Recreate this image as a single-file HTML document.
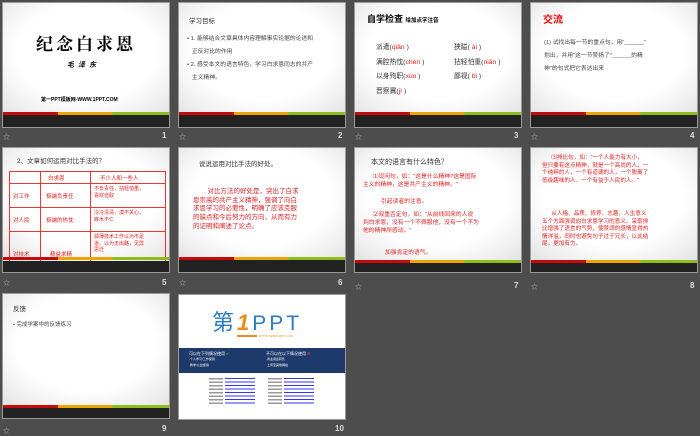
<!DOCTYPE html>
<html><head><meta charset="utf-8"><style>
*{margin:0;padding:0;box-sizing:border-box}
body{width:700px;height:433px;background:#4d4d4d;position:relative;overflow:hidden;font-family:"Liberation Sans","Noto Sans CJK SC",sans-serif}
.s{position:absolute;width:168px;height:126px;border:1px solid #9a9a9a;background:radial-gradient(ellipse 75% 70% at 50% 40%,#fff 55%,#e2e2e2 100%);overflow:hidden}
.bar{position:absolute;left:0;right:0;top:109px;height:3px;background:linear-gradient(90deg,#c80a0a 0 33%,#eba400 33% 66%,#8fbd1c 66%)}
.blk{position:absolute;left:0;right:0;top:112px;bottom:0;background:#222}
.t{position:absolute;white-space:nowrap}
.n{position:absolute;color:#ddd;font-size:8px;font-weight:bold}
.st{position:absolute;color:#bbb;font-size:7px}
.r{color:#e02020}
</style></head><body>

<!-- slide 1 -->
<div class="s" style="left:2px;top:2px">
<div class="t" style="left:33px;top:27px;font-size:17px;font-weight:bold;letter-spacing:3px;font-family:'Noto Serif CJK SC',serif">纪念白求恩</div>
<div class="t" style="left:64px;top:57px;font-size:7px;font-weight:bold;letter-spacing:4px;font-style:italic">毛泽东</div>
<div class="t" style="left:38px;top:93px;font-size:5px;font-weight:bold">第一PPT模板网-WWW.1PPT.COM</div>
<div class="bar"></div><div class="blk"></div></div>
<div class="st" style="left:3px;top:132px">☆</div><div class="n" style="left:162px;top:131px">1</div>

<!-- slide 2 -->
<div class="s" style="left:178px;top:2px">
<div class="t" style="left:10px;top:12px;font-size:6.5px;color:#333">学习目标</div>
<div class="t" style="left:8px;top:30px;font-size:5.8px;color:#444;line-height:13px">• 1. 能够结合文章具体内容理解事实论据的论述和<br>&nbsp;&nbsp;&nbsp;正反对比的作用<br>• 2. 感受本文的语言特色，学习白求恩同志的共产<br>&nbsp;&nbsp;&nbsp;主义精神。</div>
<div class="bar"></div><div class="blk"></div></div>
<div class="st" style="left:179px;top:132px">☆</div><div class="n" style="left:338px;top:131px">2</div>

<!-- slide 3 -->
<div class="s" style="left:354px;top:2px">
<div class="t" style="left:12px;top:9px;font-size:9px;font-weight:bold">自学检查 <span style="font-size:5.5px">给加点字注音</span></div>
<div class="t" style="left:21px;top:38px;font-size:6.8px;color:#333;line-height:14.5px">派遣(<span class="r">qiǎn</span> )<br>满腔热忱(<span class="r">chén</span> )<br>以身殉职(<span class="r">xùn</span> )<br>晋察冀(<span class="r">jì</span> )</div>
<div class="t" style="left:99px;top:38px;font-size:6.8px;color:#333;line-height:14.5px">狭隘( <span class="r">ài</span> )<br>拈轻怕重(<span class="r">niān</span> )<br>鄙视( <span class="r">bǐ</span> )</div>
<div class="bar"></div><div class="blk"></div></div>
<div class="st" style="left:355px;top:132px">☆</div><div class="n" style="left:514px;top:131px">3</div>

<!-- slide 4 -->
<div class="s" style="left:530px;top:2px">
<div class="t" style="left:12px;top:8px;font-size:10px;font-weight:bold;color:#e00">交流</div>
<div class="t" style="left:13px;top:34px;font-size:5.8px;color:#444;line-height:13px">(1) 试找出每一节的重点句，用"______"<br>划出，并用"这一节赞扬了"______的精<br>神"的句式把它表达出来</div>
<div class="bar"></div><div class="blk"></div></div>
<div class="st" style="left:531px;top:132px">☆</div><div class="n" style="left:690px;top:131px">4</div>

<!-- slide 5 -->
<div class="s" style="left:2px;top:147px">
<div class="t" style="left:14px;top:7px;font-size:6.5px;color:#333">2、文章如何运用对比手法的？</div>
<div style="position:absolute;left:6px;top:23px;width:157px;height:96px;border:1px solid #e33">
<div style="position:absolute;left:0;right:0;top:11px;border-top:1px solid #e33"></div>
<div style="position:absolute;left:0;right:0;top:35px;border-top:1px solid #e33"></div>
<div style="position:absolute;left:0;right:0;top:59px;border-top:1px solid #e33"></div>
<div style="position:absolute;top:0;bottom:0;left:30px;border-left:1px solid #e33"></div>
<div style="position:absolute;top:0;bottom:0;left:80px;border-left:1px solid #e33"></div>
<div class="t r" style="left:38px;top:2px;font-size:5.5px">白求恩</div>
<div class="t r" style="left:90px;top:2px;font-size:5.5px">不少人和一些人</div>
<div class="t r" style="left:3px;top:20px;font-size:5.5px">对工作</div>
<div class="t r" style="left:36px;top:20px;font-size:5.5px">极端负责任</div>
<div class="t r" style="left:84px;top:14px;font-size:5px;line-height:6.5px">不负责任，拈轻怕重，<br>喜欢自取</div>
<div class="t r" style="left:3px;top:44px;font-size:5.5px">对人民</div>
<div class="t r" style="left:36px;top:44px;font-size:5.5px">极端的热忱</div>
<div class="t r" style="left:84px;top:38px;font-size:5px;line-height:6.5px">冷冷清清，漠不关心，<br>麻木不仁</div>
<div class="t r" style="left:3px;top:78px;font-size:5.5px">对技术</div>
<div class="t r" style="left:40px;top:78px;font-size:5.5px">精益求精</div>
<div class="t r" style="left:84px;top:62px;font-size:5px;line-height:6.5px">鄙薄技术工作以为不足<br>道，以为无出路，见异<br>思迁</div>
</div>
<div class="bar"></div><div class="blk" style="top:113px"></div></div>
<div class="st" style="left:3px;top:278px">☆</div><div class="n" style="left:162px;top:278px">5</div>

<!-- slide 6 -->
<div class="s" style="left:178px;top:147px">
<div class="t" style="left:20px;top:10px;font-size:6.5px;color:#333">说说运用对比手法的好处。</div>
<div class="t r" style="left:14px;top:40px;font-size:6.5px;line-height:8.7px">&nbsp;&nbsp;&nbsp;&nbsp;&nbsp;&nbsp;&nbsp;&nbsp;对比方法的好处是，突出了白求<br>恩崇高的共产主义精神，强调了向白<br>求恩学习的必要性，明确了应该克服<br>的缺点和今后努力的方向，从而有力<br>的证明和阐述了论点。</div>
<div class="bar"></div><div class="blk"></div></div>
<div class="st" style="left:179px;top:278px">☆</div><div class="n" style="left:338px;top:278px">6</div>

<!-- slide 7 -->
<div class="s" style="left:354px;top:147px">
<div class="t" style="left:16px;top:9px;font-size:7px;color:#333">本文的语言有什么特色？</div>
<div class="t r" style="left:8px;top:25px;font-size:5.8px;line-height:8px">&nbsp;&nbsp;&nbsp;&nbsp;&nbsp;&nbsp;⑴设问句，如："这是什么精神?这是国际<br>主义的精神，这是共产主义的精神。"</div>
<div class="t r" style="left:26px;top:48px;font-size:5.8px">引起读者的注意。</div>
<div class="t r" style="left:8px;top:63px;font-size:5.8px;line-height:8px">&nbsp;&nbsp;&nbsp;&nbsp;&nbsp;&nbsp;⑵双重否定句，如："从前线回来的人说<br>到白求恩，没有一个不佩服他，没有一个不为<br>他的精神所感动。"</div>
<div class="t r" style="left:30px;top:99px;font-size:5.8px">加强肯定的语气。</div>
<div class="bar" style="top:112px"></div><div class="blk" style="top:115px"></div></div>
<div class="st" style="left:355px;top:282px">☆</div><div class="n" style="left:514px;top:281px">7</div>

<!-- slide 8 -->
<div class="s" style="left:530px;top:147px">
<div class="t r" style="left:11px;top:7px;font-size:5.6px;line-height:7.5px">&nbsp;&nbsp;&nbsp;&nbsp;&nbsp;&nbsp;⑶排比句，如："一个人能力有大小，<br>但只要有这点精神，就是一个高尚的人，一<br>个纯粹的人，一个有道德的人，一个脱离了<br>低级趣味的人，一个有益于人民的人。"</div>
<div class="t r" style="left:11px;top:63px;font-size:5.6px;line-height:7.5px">&nbsp;&nbsp;&nbsp;&nbsp;&nbsp;&nbsp;从人格、品质、修养、志趣、人生意义<br>五个方面强调向白求恩学习的意义。采取排<br>比增强了语言的气势，使赞颂的感情显得热<br>情洋溢，同时也避免句子过于冗长，以此结<br>尾，更加有力。</div>
<div class="bar" style="top:112px"></div><div class="blk" style="top:115px"></div></div>
<div class="st" style="left:531px;top:282px">☆</div><div class="n" style="left:690px;top:281px">8</div>

<!-- slide 9 -->
<div class="s" style="left:2px;top:293px">
<div class="t" style="left:10px;top:9px;font-size:6.5px;color:#333">反馈</div>
<div class="t" style="left:10px;top:26px;font-size:5.5px;color:#444">• 完成学案中的反馈练习</div>
<div class="bar" style="top:111px"></div><div class="blk" style="top:114px"></div></div>
<div class="st" style="left:3px;top:426px">☆</div><div class="n" style="left:162px;top:424px">9</div>

<!-- slide 10 -->
<div class="s" style="left:178px;top:294px;background:#fff">
<div class="t" style="left:33px;top:16px;font-size:22px;color:#2a7cc4;line-height:24px">第<span style="color:#f08a1c;font-style:italic;font-weight:bold;margin:0 3px">1</span><span style="letter-spacing:3px;font-size:21px">PPT</span></div>
<div style="position:absolute;left:58px;top:40px;width:20px;height:1.5px;background:#f08a1c"></div>
<div class="t" style="left:80px;top:39px;font-size:3px;color:#f08a1c">HTTP://WWW.1PPT.COM</div>
<div style="position:absolute;left:0;right:0;top:53px;height:25px;background:#1d3a6a"></div>
<div class="t" style="left:10px;top:56px;font-size:4px;color:#fff;line-height:5px">可以在下列情况使用 <span style="color:#4c4">✔</span><br><span style="font-size:3px">·个人学习/工作使用<br>·教学/公益使用</span></div>
<div class="t" style="left:87px;top:56px;font-size:4px;color:#fff;line-height:5px">不可以在以下情况使用 <span style="color:#e33">✘</span><br><span style="font-size:3px">·商业用途转售<br>·上传至其他网站</span></div>
<div style="position:absolute;left:30px;top:83px;width:14px;height:26px;background:repeating-linear-gradient(#999 0 1.5px,#fff 1.5px 3.5px)"></div>
<div style="position:absolute;left:46px;top:83px;width:30px;height:26px;background:repeating-linear-gradient(#33f 0 1px,#fff 1px 3.5px)"></div>
<div style="position:absolute;left:89px;top:83px;width:14px;height:26px;background:repeating-linear-gradient(#999 0 1.5px,#fff 1.5px 3.5px)"></div>
<div style="position:absolute;left:105px;top:83px;width:30px;height:26px;background:repeating-linear-gradient(#33f 0 1px,#fff 1px 3.5px)"></div>
</div>
<div class="n" style="left:335px;top:424px">10</div>
</body></html>
